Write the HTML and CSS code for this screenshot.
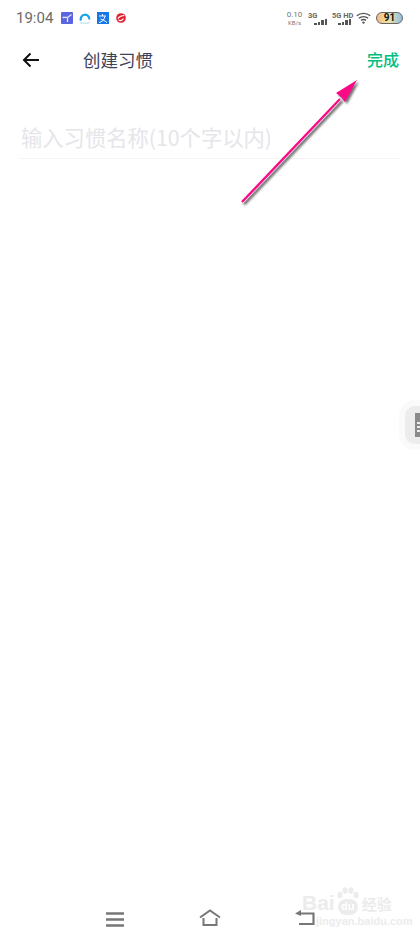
FILE: index.html
```html
<!DOCTYPE html>
<html lang="zh-CN">
<head>
    <meta charset="UTF-8">
    <meta name="viewport" content="width=device-width, initial-scale=1.0">
    <title>创建习惯</title>
    <link rel="stylesheet" href="styles.css">
</head>
<body>
    <div class="phone">
        <div class="status-bar">
            <span class="clock">19:04</span>
            <div class="app-icons">
                <svg class="app-icon" viewBox="0 0 12 12"><rect width="12" height="12" rx="1" fill="#5b63e0"/><path d="M1.500 5.500 7 5.200 10.500 2.500M6.500 5.500V10" fill="none" stroke="#e4eafc" stroke-width="1.300"/></svg>
                <svg class="app-icon" viewBox="0 0 12 12"><path d="M2 8.500a4.300 4.300 0 1 1 8.300-1" fill="none" stroke="#12a3ec" stroke-width="2.200"/><path d="M1 10.500c3 1.200 7 1.200 10-.5" fill="none" stroke="#cfeaf7" stroke-width="1.800"/></svg>
                <svg class="app-icon" viewBox="0 0 12 12"><rect width="12" height="12" fill="#1677e8"/><path d="M2 4h7M5.500 2v2M8 4.500C7 8 5 10 2 10.500M3.500 7c2 .5 4.500 2 6.500 3.500" fill="none" stroke="#fff" stroke-width="1"/></svg>
                <svg class="app-icon" viewBox="0 0 12 12"><circle cx="6" cy="6" r="4.800" fill="#e3202f"/><path d="M2.800 6.500c2-2.500 4-3 6.500-3M8.500 6.500c-1 2-3 2.500-5 1.500" fill="none" stroke="#fff" stroke-width="1.200"/></svg>
            </div>
            <div class="indicators">
                <div class="speed"><span>0.10</span><span class="speed-unit">KB/s</span></div>
                <div class="signal">
                    <span class="signal-label">3G</span>
                    <div class="bars"><i class="bar-1"></i><i class="bar-2"></i><i class="bar-3"></i><i class="bar-4"></i></div>
                </div>
                <div class="signal">
                    <span class="signal-label">5G HD</span>
                    <div class="bars"><i class="bar-1"></i><i class="bar-2"></i><i class="bar-3"></i><i class="bar-4"></i></div>
                </div>
                <svg class="wifi" viewBox="0 0 15 12"><path d="M.800 3.800C4.500.600 10.500.600 14.200 3.800M2.800 6.200C5.500 4.200 9.500 4.200 12.200 6.200M5 8.400C6.500 7.400 8.500 7.400 10 8.400" fill="none" stroke="#555" stroke-width="1.400"/><circle cx="7.500" cy="10.600" r="1.200" fill="#555"/></svg>
                <div class="battery">91</div>
            </div>
        </div>

        <header class="top-bar">
            <div class="top-left">
                <svg class="back" viewBox="0 0 18 16"><path d="M17 8H2M8.500 1.500 2 8l6.500 6.500" fill="none" stroke="#111" stroke-width="2"/></svg>
                <h1 class="title">创建习惯</h1>
            </div>
            <button class="done">完成</button>
        </header>

        <div class="name-field">
            <input class="name-input" type="text" placeholder="输入习惯名称(10个字以内)">
        </div>

        <div class="content">
            <div class="side-tab">
                <div class="side-glyph"><i></i><i></i><i></i></div>
            </div>
        </div>

        <nav class="nav-bar">
            <svg class="nav-icon nav-menu" viewBox="0 0 18 15"><path d="M0 1.500h18M0 7.500h18M0 13.500h18" fill="none" stroke="#777" stroke-width="2.400"/></svg>
            <svg class="nav-icon nav-home" viewBox="0 0 22 17"><path d="M1 8.500 11 1.500l10 7M4.500 9v7h13V9" fill="none" stroke="#777" stroke-width="2"/></svg>
            <svg class="nav-icon nav-return" viewBox="0 0 20 15"><path d="M4 3.500h14.500V14H4" fill="none" stroke="#777" stroke-width="2.200"/><path d="M6 0v6L0 3.500z" fill="#777"/></svg>
        </nav>

        <svg class="arrow" viewBox="0 0 140 140">
            <path class="arrow-edge" d="M12 132 110 29"/>
            <path class="arrow-shaft" d="M12 132 110 29"/>
            <path class="arrow-head" d="M127 10 115 32 111 27 106 23z"/>
        </svg>

        <div class="watermark">
            <div class="wm-top">
                <span class="wm-brand">Bai</span>
                <div class="wm-paw">
                    <svg class="wm-paw-toes" viewBox="0 0 22 12"><ellipse cx="3" cy="8" rx="2.500" ry="3.200"/><ellipse cx="8" cy="3.500" rx="2.500" ry="3.200"/><ellipse cx="14" cy="3.500" rx="2.500" ry="3.200"/><ellipse cx="19" cy="8" rx="2.500" ry="3.200"/></svg>
                    <span class="wm-du">du</span>
                </div>
                <span class="wm-cn">经验</span>
            </div>
            <div class="wm-url">jingyan.baidu.com</div>
        </div>
    </div>
</body>
</html>
```
FILE: styles.css
```css
*, *::before, *::after {
    box-sizing: border-box;
    margin: 0;
    padding: 0;
}

html, body {
    height: 100%;
    background: #fff;
    font-family: "Noto Sans CJK SC", Roboto, "Liberation Sans", sans-serif;
}

.phone {
    position: relative;
    width: 420px;
    height: 940px;
    display: flex;
    flex-direction: column;
    overflow: hidden;
    background: #fff;
}

/* status bar */
.status-bar {
    height: 36px;
    padding: 0 17px 0 16px;
    display: flex;
    align-items: center;
    flex-shrink: 0;
}

.clock {
    font-family: Roboto, sans-serif;
    font-size: 15px;
    color: #6b6b6b;
    width: 45px;
}

.app-icons {
    display: flex;
    align-items: center;
    gap: 6px;
}

.app-icon {
    width: 12px;
    height: 12px;
}

.indicators {
    margin-left: auto;
    display: flex;
    align-items: center;
    height: 13px;
}

.speed {
    display: flex;
    flex-direction: column;
    align-items: center;
    width: 15px;
    font-family: Roboto, sans-serif;
    font-size: 8px;
    line-height: 9.500px;
    color: #777;
    margin-right: 6px;
}

.speed-unit {
    font-size: 6px;
    line-height: 7px;
}

.signal {
    display: flex;
    flex-direction: column;
    width: 19px;
    margin-right: 5px;
}

.signal-label {
    font-family: Roboto, sans-serif;
    font-size: 7.500px;
    line-height: 7px;
    font-weight: 700;
    color: #666;
    white-space: nowrap;
}

.bars {
    display: flex;
    align-items: flex-end;
    justify-content: flex-end;
    gap: 1px;
    height: 6px;
}

.bars i {
    display: block;
    width: 2.500px;
    background: #555;
}

.bar-1 { height: 2px; }
.bar-2 { height: 3px; }
.bar-3 { height: 5px; }
.bar-4 { height: 6px; }

.wifi {
    width: 15px;
    height: 12px;
    margin-right: 5px;
}

.battery {
    width: 27px;
    height: 12px;
    border: 1px solid #666;
    border-radius: 6px;
    background: linear-gradient(90deg, #f5b988 0%, #f5e3a0 45%, #8fbfe8 100%);
    font-family: Roboto, sans-serif;
    font-size: 10px;
    line-height: 10px;
    font-weight: 700;
    text-align: center;
    color: #111;
}

/* top bar */
.top-bar {
    height: 48px;
    padding: 0 22px 0 22px;
    display: flex;
    align-items: center;
    justify-content: space-between;
    flex-shrink: 0;
}

.top-left {
    display: flex;
    align-items: center;
}

.back {
    width: 18px;
    height: 16px;
    margin-right: 43px;
}

.title {
    font-size: 17.500px;
    font-weight: 400;
    color: #3d4258;
    margin-bottom: 2px;
}

.done {
    border: none;
    background: none;
    font-family: inherit;
    font-size: 16px;
    font-weight: 500;
    color: #00bf80;
    margin: 0 -1px 2px 0;
}

/* name input */
.name-field {
    margin: 30px 20px 0 20px;
    height: 45px;
    border-bottom: 1px solid #f3f3f5;
    flex-shrink: 0;
}

.name-input {
    width: 100%;
    height: 44px;
    border: none;
    outline: none;
    background: none;
    font-family: inherit;
    font-size: 21.300px;
    padding: 0 0 0 1px;
}

.name-input::placeholder {
    color: #e5e5ea;
    opacity: 1;
}

.content {
    flex: 1;
    display: flex;
    flex-direction: column;
    align-items: flex-end;
    padding-top: 247px;
}

/* floating tab on the right edge */
.side-tab {
    width: 15px;
    height: 38px;
    background: #ececec;
    border-radius: 10px 0 0 10px;
    box-shadow: 0 0 0 6px #fafafa;
    padding: 7px 0 0 10px;
    overflow: hidden;
}

.side-glyph {
    width: 10px;
    height: 24px;
    background: #8a8a8a;
    padding-top: 9px;
    display: flex;
    flex-direction: column;
    gap: 2px;
}

.side-glyph i {
    display: block;
    height: 2px;
    margin-left: 2px;
    background: #eee;
}

/* bottom navigation */
.nav-bar {
    height: 62px;
    padding: 31px 105px 0 106px;
    display: flex;
    align-items: flex-start;
    justify-content: space-between;
    flex-shrink: 0;
}

.nav-menu {
    width: 18px;
    height: 15px;
    margin-top: 3px;
}

.nav-home {
    width: 22px;
    height: 17px;
}

.nav-return {
    width: 20px;
    height: 15px;
    margin-top: 1px;
}

/* annotation arrow */
.arrow {
    position: absolute;
    left: 230px;
    top: 70px;
    width: 140px;
    height: 140px;
    filter: drop-shadow(2px 2px 1px rgba(0, 0, 0, 0.55));
}

.arrow-edge {
    fill: none;
    stroke: #fff;
    stroke-width: 3.500;
}

.arrow-shaft {
    fill: none;
    stroke: #fb0a88;
    stroke-width: 2.400;
}

.arrow-head {
    fill: #fb0a88;
}

/* watermark */
.watermark {
    position: absolute;
    left: 302px;
    top: 886px;
    color: #ececec;
}

.wm-top {
    display: flex;
    align-items: flex-end;
    height: 29px;
}

.wm-brand {
    font-family: "Liberation Sans", sans-serif;
    font-size: 21px;
    line-height: 25px;
    font-weight: 700;
}

.wm-paw {
    width: 22px;
    margin: 0 3px 0 2px;
    display: flex;
    flex-direction: column;
    align-items: center;
}

.wm-paw-toes {
    width: 22px;
    height: 12px;
    fill: #ececec;
}

.wm-du {
    width: 20px;
    height: 16px;
    border-radius: 8px;
    background: #ececec;
    color: #fff;
    font-family: "Liberation Sans", sans-serif;
    font-size: 11px;
    line-height: 15px;
    font-weight: 700;
    text-align: center;
}

.wm-cn {
    font-size: 15px;
    line-height: 22px;
    font-weight: 700;
}

.wm-url {
    font-family: "Liberation Sans", sans-serif;
    font-size: 11px;
    font-weight: 700;
    margin-left: 14px;
}
```
